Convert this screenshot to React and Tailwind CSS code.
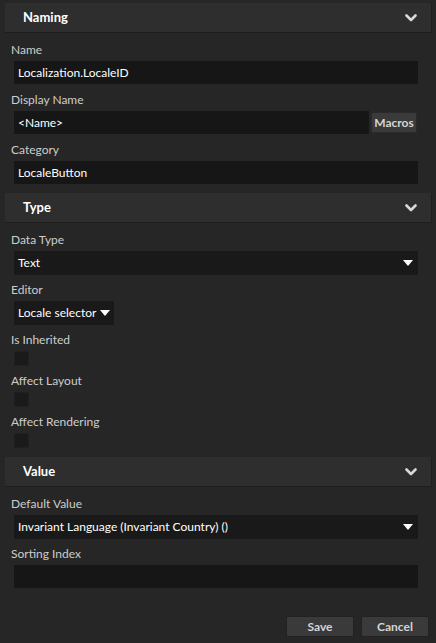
const font = { fontFamily: 'Lato, "Noto Sans", sans-serif' };

function Chevron() {
  return (
    <svg width="12" height="8" viewBox="0 0 12 8" className="text-[#d8d8d8]">
      <path d="M1.5 1.5 L6 6 L10.5 1.5" fill="none" stroke="currentColor" strokeWidth="2.6" strokeLinecap="round" strokeLinejoin="round" />
    </svg>
  );
}

function Caret() {
  return (
    <svg width="10" height="6" viewBox="0 0 10 6" className="text-white shrink-0">
      <path d="M0 0 H10 L5 6 Z" fill="currentColor" />
    </svg>
  );
}

function Section({ title, children, first }) {
  return (
    <div className={first ? "" : "mt-[9px]"}>
      <div className="mx-[5px] h-[30px] flex items-center justify-between pl-[18px] pr-[14px] bg-[#2e2e2e] border-b border-[#1d1d1d] shadow-[1px_0_0_#1f1f1f]">
        <span className="text-[13px] font-bold text-white">{title}</span>
        <Chevron />
      </div>
      <div className="px-[11px] pt-[9px]">{children}</div>
    </div>
  );
}

function Label({ children }) {
  return <div className="text-[12px] leading-[16px] text-[#cdcdcd] h-[16px] mb-[3px] whitespace-nowrap">{children}</div>;
}

function Input({ value, className = "" }) {
  return (
    <div className={"h-[23px] bg-[#161616] flex items-center pl-[4px] text-[12px] text-white whitespace-nowrap " + className}>
      {value}
    </div>
  );
}

function Select({ value }) {
  return (
    <div className="ml-[3px] w-[404px] h-[24px] bg-[#191919] flex items-center justify-between pl-[4px] pr-[5px] text-[12px] text-white whitespace-nowrap">
      <span>{value}</span>
      <Caret />
    </div>
  );
}

function Checkbox() {
  return <div className="ml-[3px] w-[15px] h-[15px] bg-[#1a1a1a] border border-[#202020]" />;
}

export default function App() {
  return (
    <div className="w-[436px] h-[643px] bg-[#262626] pt-[3px] overflow-hidden" style={font}>
      <Section title="Naming" first>
        <Label>Name</Label>
        <Input value="Localization.LocaleID" className="ml-[3px] w-[404px]" />
        <div className="mt-[8px]">
          <Label>Display Name</Label>
          <div className="flex items-center ml-[3px]">
            <Input value="<Name>" className="w-[355px]" />
            <button className="ml-[2px] w-[46px] h-[21px] bg-[#3a3a3a] border border-[#2a2a2a] rounded-[2px] text-[12px] font-bold text-[#d4d4d4] flex items-center justify-center">
              Macros
            </button>
          </div>
        </div>
        <div className="mt-[8px]">
          <Label>Category</Label>
          <Input value="LocaleButton" className="ml-[3px] w-[404px]" />
        </div>
      </Section>

      <Section title="Type">
        <Label>Data Type</Label>
        <Select value="Text" />
        <div className="mt-[7px]">
          <Label>Editor</Label>
          <div className="ml-[3px] w-[100px] h-[24px] bg-[#191919] flex items-center justify-between pl-[4px] pr-[4px] text-[12px] text-white whitespace-nowrap">
            <span>Locale selector</span>
            <Caret />
          </div>
        </div>
        <div className="mt-[7px]">
          <Label>Is Inherited</Label>
          <Checkbox />
        </div>
        <div className="mt-[7px]">
          <Label>Affect Layout</Label>
          <Checkbox />
        </div>
        <div className="mt-[7px]">
          <Label>Affect Rendering</Label>
          <Checkbox />
        </div>
      </Section>

      <Section title="Value">
        <Label>Default Value</Label>
        <Select value="Invariant Language (Invariant Country) ()" />
        <div className="mt-[7px]">
          <Label>Sorting Index</Label>
          <Input value="" className="ml-[3px] w-[404px]" />
        </div>
      </Section>

      <div className="flex justify-end gap-[7px] pr-[7px] mt-[28px]">
        <button className="w-[68px] h-[21px] bg-[#3a3a3a] border border-[#222] rounded-[2px] text-[12px] font-bold text-[#d4d4d4]">Save</button>
        <button className="w-[68px] h-[21px] bg-[#3a3a3a] border border-[#222] rounded-[2px] text-[12px] font-bold text-[#d4d4d4]">Cancel</button>
      </div>
    </div>
  );
}
